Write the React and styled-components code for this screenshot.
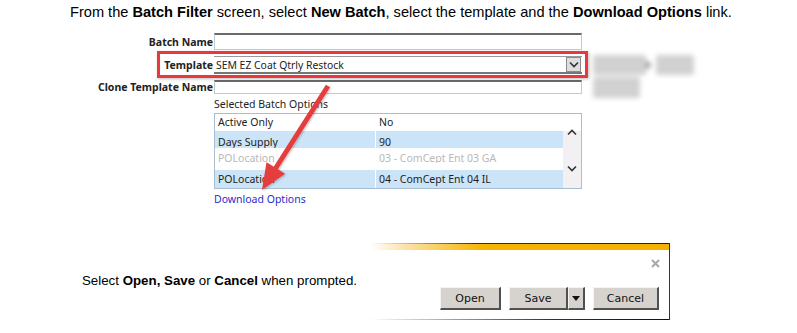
import React from "react";
import styled, { createGlobalStyle } from "styled-components";

const Global = createGlobalStyle`
  html, body { margin: 0; padding: 0; background: #fff; }
  body { font-family: "Liberation Sans", Arial, sans-serif; }
`;

const Page = styled.div`
  position: relative;
  width: 797px;
  height: 333px;
  overflow: hidden;
  display: flex;
  flex-direction: column;
`;

const Intro = styled.p`
  margin: 0;
  padding: 4px 0 0 70px;
  font-size: 14.6px;
  line-height: 16px;
  color: #000;
  white-space: nowrap;
  b { font-weight: bold; }
`;

const FormRow = styled.div`
  display: flex;
  height: 61px;
  margin-top: 13px;
  font-family: "Noto Sans", "Open Sans", sans-serif;
`;

const FormGrid = styled.div`
  display: grid;
  grid-template-columns: 213px 368px;
  grid-template-rows: 17px 30px 14px;
  column-gap: 1px;
  align-items: center;
`;

const Label = styled.label`
  text-align: right;
  font-size: 10.5px;
  font-weight: bold;
  color: #222;
  white-space: nowrap;
  line-height: 14px;
`;

const TextInput = styled.div`
  box-sizing: border-box;
  height: ${(p) => p.$h}px;
  border: 1px solid #c9c9c9;
  border-top: 2px solid #6a6a6a;
  background: #fff;
`;

const Select = styled.div`
  box-sizing: border-box;
  height: 18px;
  display: flex;
  align-items: center;
  justify-content: space-between;
  border-top: 1px solid #9a9a9a;
  border-bottom: 2px solid #777;
  background: #fff;
  font-size: 10.4px;
  color: #222;
  padding-left: 2px;
`;

const DropBtn = styled.div`
  width: 15px;
  height: 15px;
  box-sizing: border-box;
  border: 1px solid #8a8a8a;
  background: #dedede;
  display: flex;
  align-items: center;
  justify-content: center;
  margin-right: 1px;
`;

const SideTools = styled.div`
  margin-left: 11px;
  padding-top: 22px;
  display: grid;
  grid-template-columns: 53px 10px 38px;
  grid-template-rows: 20px 21px;
  row-gap: 2px;
  align-items: center;
  filter: blur(2.5px);
  opacity: 0.85;
`;

const GhostBtn = styled.div`
  background: #c9c9c9;
  border-radius: 2px;
  width: ${(p) => p.$w}px;
  height: 100%;
`;

const GhostArrow = styled.div`
  width: 0;
  height: 0;
  border-top: 5px solid transparent;
  border-bottom: 5px solid transparent;
  border-left: 6px solid #888;
`;

const Options = styled.div`
  margin-left: 214px;
  margin-top: 3px;
  font-family: "Noto Sans", "Open Sans", sans-serif;
  font-size: 10.5px;
  color: #222;
`;

const OptionsTitle = styled.div`
  line-height: 14px;
  height: 16px;
`;

const ListBox = styled.div`
  box-sizing: border-box;
  width: 368px;
  height: 76px;
  border: 1px solid #a9bdd3;
  display: flex;
  background: #fff;
`;

const Rows = styled.div`
  flex: 1;
  display: flex;
  flex-direction: column;
`;

const Row = styled.div`
  display: grid;
  grid-template-columns: 160px 1fr;
  column-gap: 1px;
  height: ${(p) => p.$h}px;
  margin-top: ${(p) => p.$mt || 0}px;
  overflow: hidden;
  background: #fff;
`;

const Cell = styled.div`
  background: ${(p) => (p.$blue ? "#cce4f7" : "#fff")};
  padding-left: 3px;
  line-height: ${(p) => p.$lh || 16}px;
  white-space: nowrap;
  overflow: hidden;
  color: ${(p) => (p.$faded ? "#b8b8b8" : "#222")};
  padding-top: ${(p) => p.$pt || 0}px;
  span {
    display: block;
    transform: translateY(${(p) => p.$shift || 0}px);
  }
`;

const ScrollCol = styled.div`
  width: 18px;
  display: flex;
  flex-direction: column;
  align-items: center;
  background: linear-gradient(#fff 0 17px, #f3f0f4 17px);
  padding-top: 15px;
  gap: 29px;
`;

const Link = styled.a`
  display: block;
  margin-top: 3px;
  color: #2b2bd0;
  text-decoration: none;
  line-height: 14px;
`;

const PromptRow = styled.div`
  display: flex;
  align-items: center;
  margin-top: 37px;
`;

const PromptText = styled.div`
  box-sizing: border-box;
  width: 370px;
  padding-left: 82px;
  padding-bottom: 2px;
  font-size: 13.3px;
  color: #000;
  white-space: nowrap;
`;

const Dialog = styled.div`
  width: 299px;
  display: flex;
  flex-direction: column;
  border-right: 1px solid #333;
  background: #fff;
`;

const TopBar = styled.div`
  height: 1px;
  background: linear-gradient(90deg, rgba(40,40,40,0) 0%, #333 35%, #222 100%);
`;

const Orange = styled.div`
  height: 6px;
  background: linear-gradient(90deg, #fff 0%, #fbe3a6 12%, #f5b400 38%, #f5b000 100%);
`;

const CloseRow = styled.div`
  height: 22px;
  margin-top: 2px;
  display: flex;
  align-items: center;
  justify-content: flex-end;
  padding-right: 9px;
`;

const ButtonRow = styled.div`
  display: flex;
  justify-content: flex-end;
  gap: 8px;
  margin-top: 13px;
  padding-right: 10px;
  padding-bottom: 9px;
`;

const SplitGroup = styled.div`
  display: flex;
`;

const WinBtn = styled.div`
  box-sizing: border-box;
  width: ${(p) => p.$w}px;
  height: 23px;
  background: #d6d3ce;
  border-top: 1px solid #f4f3f1;
  border-left: 1px solid #f4f3f1;
  border-right: 2px solid #505050;
  border-bottom: 2px solid #505050;
  display: flex;
  align-items: center;
  justify-content: center;
  font-family: "DejaVu Sans", Tahoma, sans-serif;
  font-size: 11px;
  color: #111;
`;

const BottomLine = styled.div`
  height: 1px;
  background: linear-gradient(90deg, rgba(40,40,40,0) 0%, #bbb 20%, #333 60%, #111 100%);
`;

const Highlight = styled.div`
  position: absolute;
  left: 157px;
  top: 51px;
  width: 431px;
  height: 27px;
  box-sizing: border-box;
  border: 3px solid #e8383d;
  box-shadow: 1px 1px 3px rgba(0,0,0,0.25);
  pointer-events: none;
`;

const Overlay = styled.svg`
  position: absolute;
  left: 0;
  top: 0;
  pointer-events: none;
`;

const Chevron = ({ up }) => (
  <svg width="10" height="7" viewBox="0 0 10 7">
    <path
      d={up ? "M1 5.5 L5 1.5 L9 5.5" : "M1 1.5 L5 5.5 L9 1.5"}
      fill="none"
      stroke="#333"
      strokeWidth="1.6"
    />
  </svg>
);

export default function App() {
  return (
    <>
      <Global />
      <Page>
        <Intro>
          From the <b>Batch Filter</b> screen, select <b>New Batch</b>, select the template and the{" "}
          <b>Download Options</b> link.
        </Intro>

        <FormRow>
          <FormGrid>
            <Label>Batch Name</Label>
            <TextInput $h={17} />
            <Label>Template</Label>
            <Select>
              SEM EZ Coat Qtrly Restock
              <DropBtn>
                <Chevron />
              </DropBtn>
            </Select>
            <Label>Clone Template Name</Label>
            <TextInput $h={14} />
          </FormGrid>
          <SideTools>
            <GhostBtn $w={53} />
            <GhostArrow />
            <GhostBtn $w={38} />
            <GhostBtn $w={47} />
          </SideTools>
        </FormRow>

        <Options>
          <OptionsTitle>Selected Batch Options</OptionsTitle>
          <ListBox>
            <Rows>
              <Row $h={17}>
                <Cell>Active Only</Cell>
                <Cell>No</Cell>
              </Row>
              <Row $h={17}>
                <Cell $blue $pt={5} $lh={12}>Days Supply</Cell>
                <Cell $blue $pt={5} $lh={12}>90</Cell>
              </Row>
              <Row $h={10} $mt={5}>
                <Cell $faded $lh={10}><span>POLocation</span></Cell>
                <Cell $faded $lh={10}><span>03 - ComCept Ent 03 GA</span></Cell>
              </Row>
              <Row $h={18} $mt={7}>
                <Cell $blue $pt={1}>POLocation</Cell>
                <Cell $blue $pt={1}>04 - ComCept Ent 04 IL</Cell>
              </Row>
            </Rows>
            <ScrollCol>
              <Chevron up />
              <Chevron />
            </ScrollCol>
          </ListBox>
          <Link href="#">Download Options</Link>
        </Options>

        <PromptRow>
          <PromptText>
            Select <b>Open, Save</b> or <b>Cancel</b> when prompted.
          </PromptText>
          <Dialog>
            <TopBar />
            <Orange />
            <CloseRow>
              <svg width="9" height="9" viewBox="0 0 9 9">
                <path d="M1 1 L8 8 M8 1 L1 8" stroke="#a8a8a8" strokeWidth="2" />
              </svg>
            </CloseRow>
            <ButtonRow>
              <WinBtn $w={61}>Open</WinBtn>
              <SplitGroup>
                <WinBtn $w={59}>Save</WinBtn>
                <WinBtn $w={17}>
                  <svg width="8" height="5" viewBox="0 0 8 5">
                    <path d="M0 0 H8 L4 5 Z" fill="#111" />
                  </svg>
                </WinBtn>
              </SplitGroup>
              <WinBtn $w={66}>Cancel</WinBtn>
            </ButtonRow>
            <BottomLine />
          </Dialog>
        </PromptRow>

        <Highlight />
        <Overlay width="797" height="333" viewBox="0 0 797 333">
          <defs>
            <filter id="sh" x="-20%" y="-20%" width="140%" height="140%">
              <feDropShadow dx="1" dy="1" stdDeviation="1" floodColor="#000" floodOpacity="0.25" />
            </filter>
          </defs>
          <polygon
            filter="url(#sh)"
            fill="#e53e3e"
            points="325.9,84.7 330.1,87.3 277.9,169.3 285.1,173.8 262,190 266.5,162.2 273.7,166.7"
          />
        </Overlay>
      </Page>
    </>
  );
}
